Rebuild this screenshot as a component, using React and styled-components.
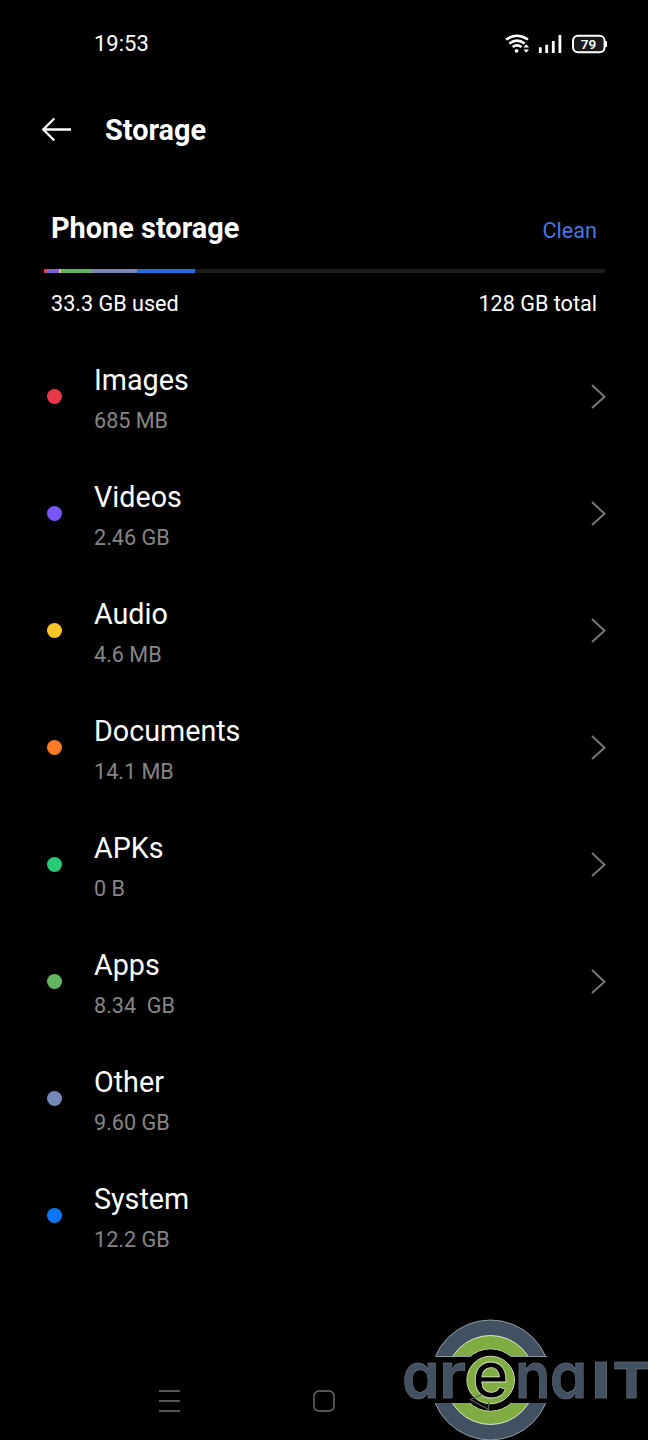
import React from 'react';
import styled, {createGlobalStyle} from 'styled-components';

const GlobalStyle = createGlobalStyle`
  * {
    box-sizing: border-box;
  }
  body {
    margin: 0;
    background: #000;
    color: #fff;
    font-family: Roboto, sans-serif;
  }
`;
const Screen = styled.div`
  display: flex;
  flex-direction: column;
  width: 648px;
  height: 1440px;
  overflow: hidden;
  background: #000;
`;
const StatusBar = styled.div`
  display: flex;
  align-items: center;
  justify-content: space-between;
  height: 88px;
  padding: 0 40px 0 94px;
`;
const Clock = styled.span`
  font-size: 22px;
  line-height: 26px;
`;
const Header = styled.header`
  display: flex;
  align-items: center;
  gap: 33px;
  height: 84px;
  padding-left: 41px;
`;
const Title = styled.h1`
  margin: 0;
  font-size: 28.9px;
  line-height: 34px;
  font-weight: 700;
`;
const SummaryRow = styled.div`
  display: flex;
  align-items: center;
  justify-content: space-between;
  height: 60px;
  padding: 0 51px;
  font-size: 21.6px;
`;
const TitleRow = styled(SummaryRow)`
  height: 70px;
  margin-top: 21px;
`;
const Subtitle = styled.h2`
  margin: 0;
  font-size: 28.9px;
  line-height: 34px;
  font-weight: 700;
`;
const Clean = styled.span`
  padding-top: 4px;
  color: #4377e4;
`;
const Bar = styled.div`
  display: flex;
  height: 4px;
  margin: 6px 43px 0 44px;
  border-radius: 1px;
  overflow: hidden;
  background: #1c1c1c;
`;
const Segment = styled.div`
  width: ${props => props.$width}px;
  background: ${props => props.$color};
`;
const List = styled.div`
  flex: 1;
  padding-top: 5px;
`;
const Row = styled.div`
  display: flex;
  align-items: center;
  height: 117px;
  padding: 0 42px 0 47px;
`;
const Dot = styled.div`
  width: 15px;
  height: 15px;
  border-radius: 50%;
  background: ${props => props.$color};
`;
const Labels = styled.div`
  flex: 1;
  padding: 3px 0 0 32px;
`;
const Name = styled.div`
  font-size: 28.7px;
  line-height: 40px;
`;
const Size = styled.div`
  font-size: 21.6px;
  line-height: 32px;
  padding-top: 5px;
  color: #858585;
  white-space: pre;
`;
const NavBar = styled.div`
  position: relative;
  display: flex;
  align-items: center;
  height: 78px;
  padding-left: 159px;
  gap: 133px;
`;
const Watermark = styled.svg`
  position: absolute;
  right: 0;
  bottom: 0;
`;
const Letters = styled.g`
  font-family: Inter, sans-serif;
  font-size: 64px;
  font-weight: 600;
  font-feature-settings: "cv11";
  fill: #425161;
  stroke: #7d8992;
  stroke-width: 0.4px;
`;
const InnerLetter = styled.text`
  font-weight: 500;
  fill: #000;
  stroke: #d5e2c6;
  stroke-width: 0.8px;
`;
const Capital = styled.text`
  font-size: 49.5px;
  font-weight: ${props => props.$weight};
`;

const segments = [
    {color: '#d9454f', width: 3},
    {color: '#8260d8', width: 12},
    {color: '#e6bd72', width: 2},
    {color: '#65ae69', width: 31},
    {color: '#7d89b2', width: 45},
    {color: '#1c70dc', width: 58},
];

const items = [
    {name: 'Images', size: '685 MB', color: '#e8394a', link: true},
    {name: 'Videos', size: '2.46 GB', color: '#7856f7', link: true},
    {name: 'Audio', size: '4.6 MB', color: '#fec526', link: true},
    {name: 'Documents', size: '14.1 MB', color: '#fb7b27', link: true},
    {name: 'APKs', size: '0 B', color: '#2acb78', link: true},
    {name: 'Apps', size: '8.34  GB', color: '#62b662', link: true},
    {name: 'Other', size: '9.60 GB', color: '#7589b9'},
    {name: 'System', size: '12.2 GB', color: '#0b77f8'},
];

const StatusIcons = () => (
    <svg width="104" height="24" viewBox="504 32 104 24" fill="none" stroke="#fff">
        <path d="M506 39.6Q517 31.8 528 39.6M509.3 43.4Q517 37.8 524.7 43.4M512.6 47Q517 43.8 521.4 47" strokeWidth="2.5" />
        <circle cx="516.6" cy="50.8" r="1.9" fill="#fff" stroke="none" />
        <path d="M523.5 47.5L526.2 44.2L529 47.5ZM523.5 49.4L526.2 52.7L529 49.4Z" fill="#fff" stroke="none" />
        <path d="M540.3 47.3V53M546.7 44.7V53M553.3 41V53M559.9 35V53" strokeWidth="2.8" />
        <rect x="573" y="35.8" width="31.6" height="16.4" rx="5" fill="#1b1b1b" strokeWidth="2" />
        <path d="M606 41.2V47" strokeWidth="2" />
        <text x="588.5" y="48.6" textAnchor="middle" fontSize="13.5" fontWeight="600" fill="#fff" stroke="none">79</text>
    </svg>
);

const BackArrow = () => (
    <svg width="31" height="26" viewBox="41 117 31 26" fill="none" stroke="#fff" strokeWidth="2.4">
        <path d="M71 129.5H43.5M54.3 118.5L43.3 129.5L54.3 140.5" />
    </svg>
);

const Chevron = () => (
    <svg width="16" height="26" viewBox="590 384 16 26" fill="none" stroke="#777" strokeWidth="2">
        <path d="M592 385L604.5 396.8L592 408" />
    </svg>
);

const Logo = () => (
    <Watermark width="248" height="122" viewBox="400 1318 248 122">
        <circle cx="490.5" cy="1380" r="60" fill="#425161" stroke="#a9b3bb" strokeWidth="0.8" />
        <circle cx="490.5" cy="1380" r="44.5" fill="#80ad42" stroke="#dfe8d2" strokeWidth="1" />
        <circle cx="490.5" cy="1380" r="31" fill="#000" stroke="#c9dab4" strokeWidth="1" />
        <path d="M420 1356.5H562V1403H420Z" />
        <path d="M436 1356.5H470.5M510.5 1356.5H547" stroke="#aab4b2" strokeWidth="0.8" />
        <circle cx="490.5" cy="1380" r="30.5" />
        <circle cx="490.7" cy="1380" r="23.8" fill="#80ad42" stroke="#c9dab4" strokeWidth="1" />
        <Letters>
            <text x="402" y="1397.5" textLength="37.5" lengthAdjust="spacingAndGlyphs">a</text>
            <text x="438.8" y="1397.5" textLength="27.5" lengthAdjust="spacingAndGlyphs">r</text>
            <InnerLetter x="472.3" y="1397" textLength="36.5" lengthAdjust="spacingAndGlyphs">e</InnerLetter>
            <text x="515" y="1397.5" textLength="35.5" lengthAdjust="spacingAndGlyphs">n</text>
            <text x="549.7" y="1397.5" textLength="37.5" lengthAdjust="spacingAndGlyphs">a</text>
            <Capital $weight={900} x="592.5" y="1397.5" textLength="17" lengthAdjust="spacingAndGlyphs">I</Capital>
            <Capital $weight={800} x="613" y="1397.5" textLength="37" lengthAdjust="spacingAndGlyphs">T</Capital>
        </Letters>
        <path d="M483 1394L470.5 1399.5L488.5 1409.5V1402" fill="none" stroke="#5d6156" strokeWidth="1.2" />
    </Watermark>
);

const App = () => {
    return (
        <Screen>
            <GlobalStyle />
            <StatusBar>
                <Clock>19:53</Clock>
                <StatusIcons />
            </StatusBar>
            <Header>
                <BackArrow />
                <Title>Storage</Title>
            </Header>
            <TitleRow>
                <Subtitle>Phone storage</Subtitle>
                <Clean>Clean</Clean>
            </TitleRow>
            <Bar>
                {segments.map(segment => (
                    <Segment key={segment.color} $width={segment.width} $color={segment.color} />
                ))}
            </Bar>
            <SummaryRow>
                <span>33.3 GB used</span>
                <span>128 GB total</span>
            </SummaryRow>
            <List>
                {items.map(item => (
                    <Row key={item.name}>
                        <Dot $color={item.color} />
                        <Labels>
                            <Name>{item.name}</Name>
                            <Size>{item.size}</Size>
                        </Labels>
                        {item.link && <Chevron />}
                    </Row>
                ))}
            </List>
            <NavBar>
                <svg width="21" height="22" fill="none" stroke="#707070" strokeWidth="1.6">
                    <path d="M0 1H21M0 11H21M0 21H21" />
                </svg>
                <svg width="22" height="22" fill="none" stroke="#707070" strokeWidth="1.4">
                    <rect x="1" y="1" width="20" height="20" rx="5" />
                </svg>
                <Logo />
            </NavBar>
        </Screen>
    );
};

export default App;
